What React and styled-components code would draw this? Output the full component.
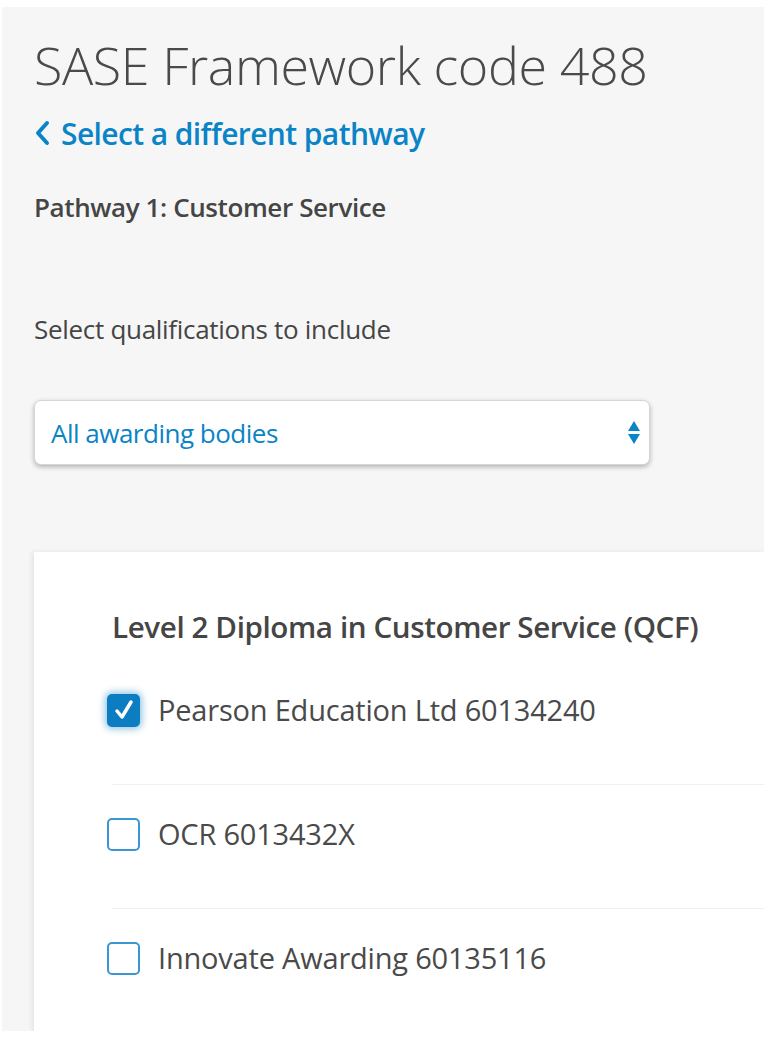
import React from "react";
import styled, { createGlobalStyle } from "styled-components";

const Global = createGlobalStyle`
  html, body { margin: 0; padding: 0; background: #ffffff; }
  body { font-family: "Open Sans", "Noto Sans", sans-serif; }
  * { box-sizing: border-box; }
`;

const Panel = styled.main`
  margin: 7px 18px 0 2px;
  height: 1024px;
  background: #f6f6f6;
  padding-left: 32px;
  overflow: hidden;
  display: flex;
  flex-direction: column;
  & > * { flex-shrink: 0; }
`;

const Title = styled.h1`
  margin: 30px 0 0 0;
  font-size: 52px;
  line-height: 56px;
  font-weight: 300;
  color: #4a4a4a;
  letter-spacing: -0.4px;
  white-space: nowrap;
`;

const BackLink = styled.a`
  margin-top: 22px;
  display: flex;
  align-items: center;
  gap: 11px;
  height: 36px;
  color: #0a84c6;
  font-size: 30px;
  font-weight: 600;
  text-decoration: none;
  letter-spacing: -0.6px;
  cursor: pointer;
`;

const Chevron = styled.svg`
  width: 16px;
  height: 26px;
  flex-shrink: 0;
`;

const Subtitle = styled.div`
  margin-top: 42px;
  font-size: 26px;
  line-height: 28px;
  font-weight: 600;
  color: #454545;
  letter-spacing: -0.4px;
`;

const Label = styled.div`
  margin-top: 93px;
  font-size: 26px;
  line-height: 30px;
  font-weight: 400;
  color: #454545;
  letter-spacing: -0.3px;
`;

const SelectBox = styled.div`
  margin-top: 56px;
  width: 616px;
  height: 65px;
  background: #ffffff;
  border-radius: 7px;
  border: 1px solid #d6d6d6;
  box-shadow: 0 2px 5px rgba(0, 0, 0, 0.28);
  display: flex;
  align-items: center;
  justify-content: space-between;
  padding: 0 8px 0 16px;
`;

const SelectText = styled.span`
  color: #0a84c6;
  font-size: 26px;
  font-weight: 500;
  letter-spacing: -0.5px;
`;

const Arrows = styled.svg`
  width: 14px;
  height: 26px;
`;

const Card = styled.section`
  margin-top: 87px;
  background: #ffffff;
  box-shadow: -2px 0 5px rgba(0, 0, 0, 0.08);
  padding: 57px 0 0 78px;
`;

const CardTitle = styled.h2`
  margin: 0;
  font-size: 29.6px;
  line-height: 36px;
  font-weight: 600;
  color: #454545;
  letter-spacing: -0.4px;
  white-space: nowrap;
`;

const List = styled.ul`
  list-style: none;
  margin: 16px 0 0 0;
  padding: 0;
`;

const Row = styled.li`
  display: flex;
  align-items: center;
  gap: 18px;
  padding: 32px 0 57px 0;
  border-bottom: 1px solid #f0f0f0;
`;

const Box = styled.span`
  margin-left: -5px;
  width: 33px;
  height: 33px;
  flex-shrink: 0;
  border-radius: 5px;
  border: 2px solid ${(p) => (p.$checked ? "#0b7dc0" : "#3b97d3")};
  background: ${(p) => (p.$checked ? "#0b7dc0" : "#ffffff")};
  box-shadow: ${(p) => (p.$checked ? "0 0 7px 2px rgba(11,125,192,0.45)" : "none")};
  display: flex;
  align-items: center;
  justify-content: center;
`;

const RowText = styled.span`
  font-size: 29px;
  line-height: 34px;
  font-weight: 400;
  color: #4a4a4a;
  letter-spacing: -0.2px;
`;

const items = [
  { label: "Pearson Education Ltd 60134240", checked: true },
  { label: "OCR 6013432X", checked: false },
  { label: "Innovate Awarding 60135116", checked: false },
];

export default function App() {
  return (
    <>
      <Global />
      <Panel>
        <Title>SASE Framework code 488</Title>
        <BackLink>
          <Chevron viewBox="0 0 16 26">
            <polyline points="13,3 4,13 13,23" fill="none" stroke="#0a84c6" strokeWidth="4" strokeLinecap="round" strokeLinejoin="round" />
          </Chevron>
          Select a different pathway
        </BackLink>
        <Subtitle>Pathway 1: Customer Service</Subtitle>
        <Label>Select qualifications to include</Label>
        <SelectBox>
          <SelectText>All awarding bodies</SelectText>
          <Arrows viewBox="0 0 14 26">
            <polygon points="7,1 13,11 1,11" fill="#0a84c6" />
            <polygon points="1,14 13,14 7,24" fill="#0a84c6" />
          </Arrows>
        </SelectBox>
        <Card>
          <CardTitle>Level 2 Diploma in Customer Service (QCF)</CardTitle>
          <List>
            {items.map((it) => (
              <Row key={it.label}>
                <Box $checked={it.checked}>
                  {it.checked && (
                    <svg width="22" height="22" viewBox="0 0 22 22">
                      <path d="M4 12 L9 18 L18 3" fill="none" stroke="#ffffff" strokeWidth="3.5" strokeLinecap="round" strokeLinejoin="round" />
                    </svg>
                  )}
                </Box>
                <RowText>{it.label}</RowText>
              </Row>
            ))}
          </List>
        </Card>
      </Panel>
    </>
  );
}
